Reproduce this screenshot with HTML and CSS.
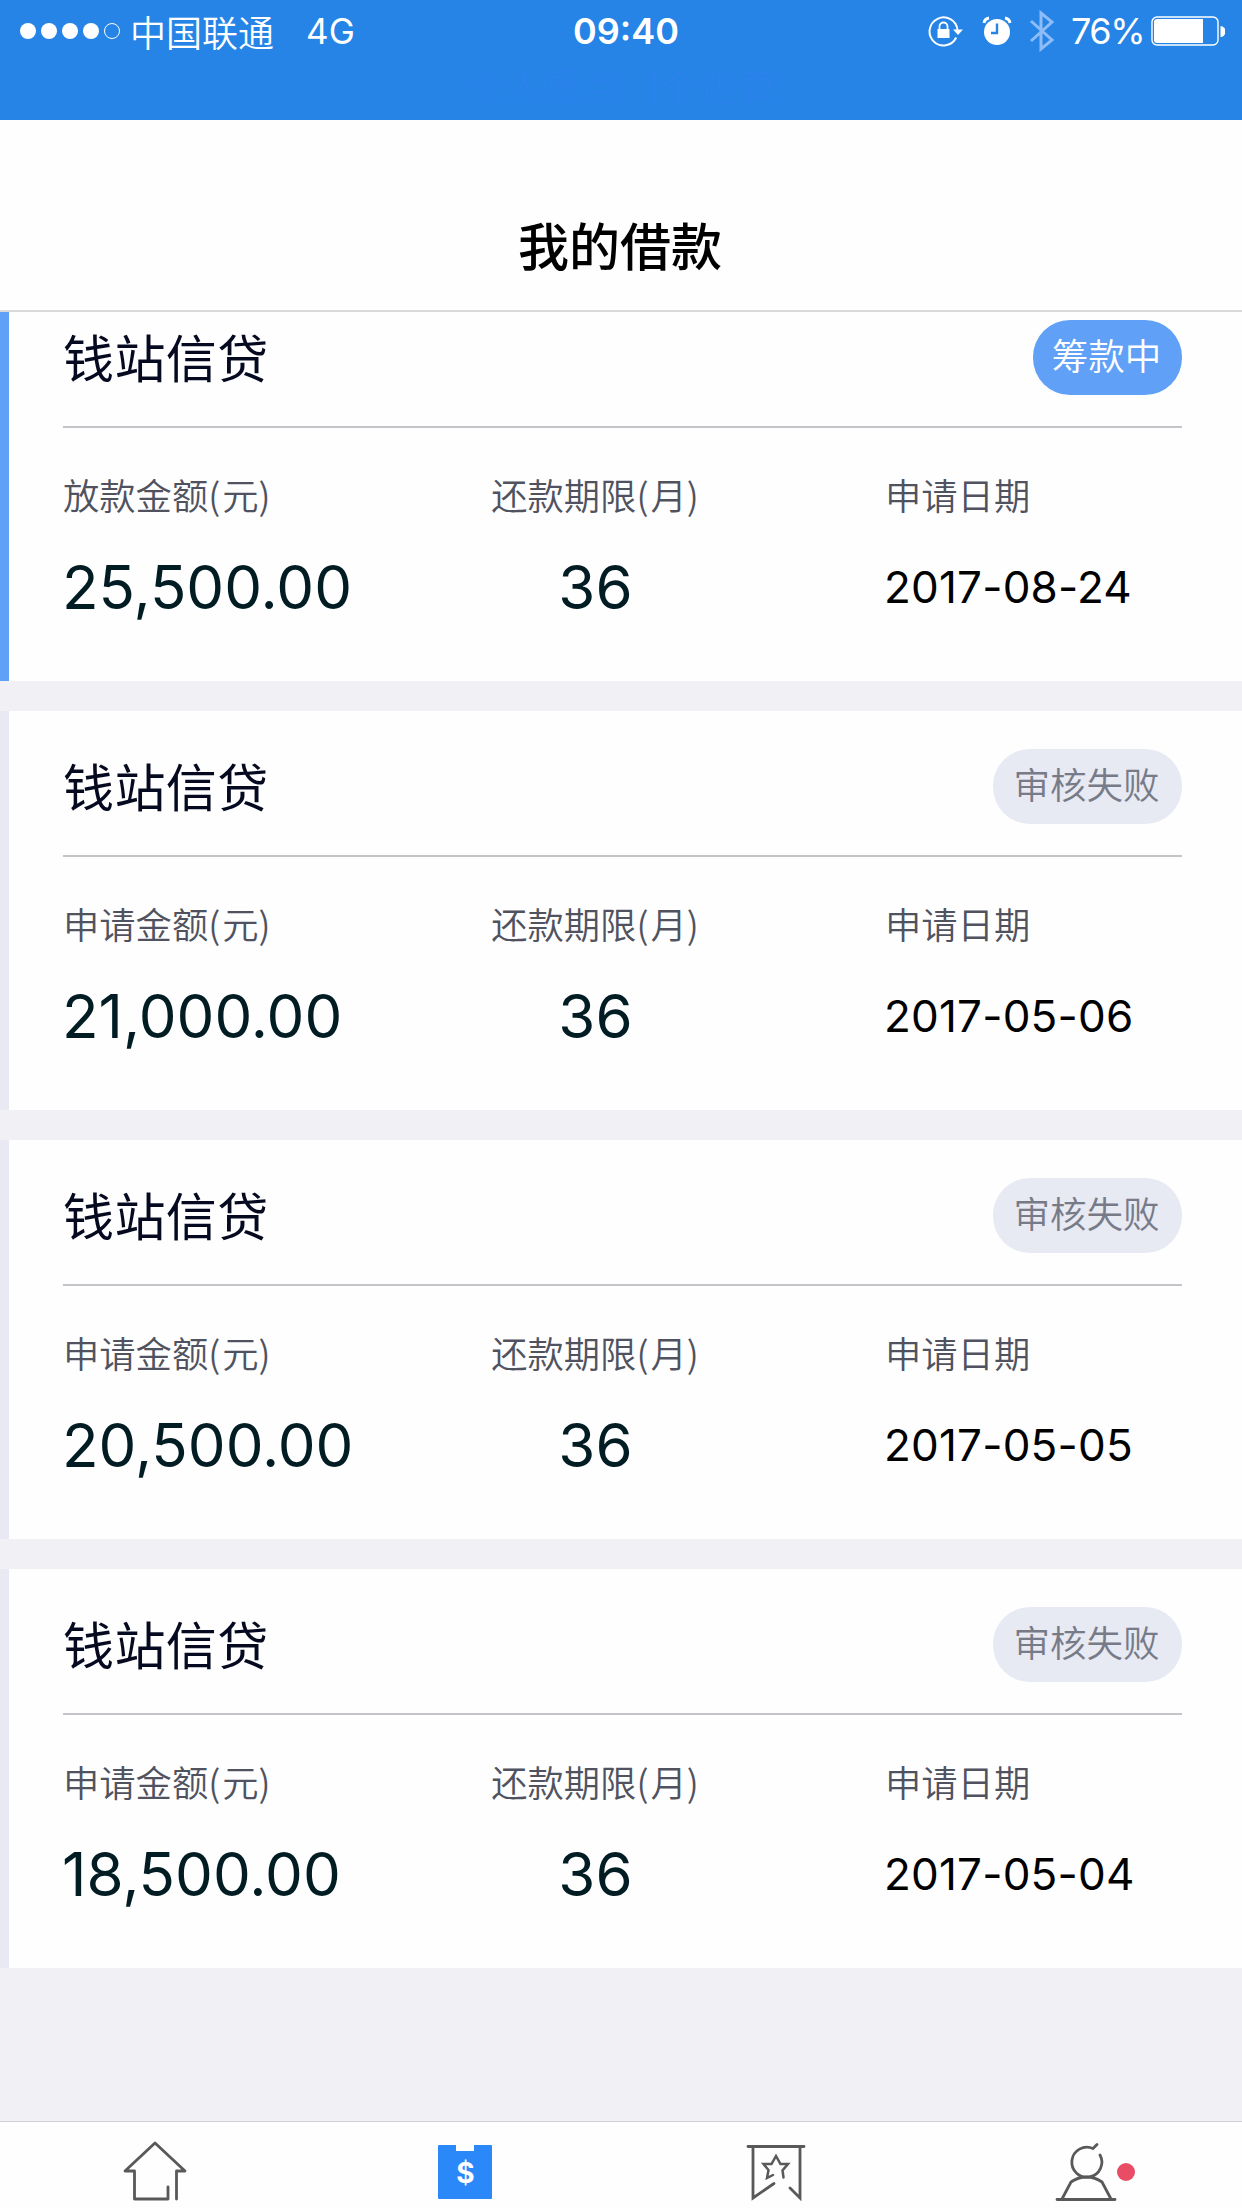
FILE: index.html
```html
<!DOCTYPE html>
<html lang="zh-CN">

<head>
    <meta charset="UTF-8">
    <meta name="viewport" content="width=device-width, initial-scale=1.0">
    <title>我的借款</title>
    <link rel="stylesheet" href="styles.css">
</head>

<body>
    <div class="status-bar">
        <div class="status-row">
            <div class="status-left">
                <div class="signal"><i></i><i></i><i></i><i></i><i class="empty"></i></div>
                <span class="carrier">中国联通</span>
                <span class="network">4G</span>
            </div>
            <span class="time">09:40</span>
            <div class="status-right">
                <svg class="icon-lock" width="36" height="32" viewBox="0 0 36 32" fill="none">
                    <path d="M28.2 22.5A14 14 0 1 1 29.5 15" stroke="#fff" stroke-width="2" />
                    <path d="M25 14.5h10l-5 5.500z" fill="#fff" />
                    <path d="M11.500 15v-3.500a4 4 0 0 1 8 0V15" stroke="#fff" stroke-width="1.800" />
                    <rect x="9.500" y="14" width="12" height="9" fill="#fff" />
                </svg>
                <svg class="icon-alarm" width="30" height="30" viewBox="0 0 30 30" fill="none">
                    <circle cx="15" cy="16" r="13" fill="#fff" />
                    <path d="M2 7a6 6 0 0 1 5-5M23 2a6 6 0 0 1 5 5" stroke="#fff" stroke-width="3" />
                    <path d="M15 7.500V17H9" stroke="#2584e6" stroke-width="2.400" />
                </svg>
                <svg class="icon-bluetooth" width="26" height="42" viewBox="0 0 26 42" fill="none">
                    <path d="M2 11l21 19-11 9V3l11 9L2 31" stroke="#8ebcf8" stroke-width="3" />
                </svg>
                <span class="battery-text">76%</span>
                <svg class="icon-battery" width="74" height="30" viewBox="0 0 74 30" fill="none">
                    <rect x="1" y="1" width="66" height="28" rx="5" stroke="#fff" stroke-width="1.400" />
                    <path d="M6 3h46v24H6a3 3 0 0 1-3-3V6a3 3 0 0 1 3-3z" fill="#fff" />
                    <path d="M69.500 10a5 5.500 0 0 1 0 11z" fill="#fff" />
                </svg>
            </div>
        </div>
        <p class="notice">个人重点&nbsp; 1个进算</p>
    </div>

    <header class="nav-bar">
        <h1>我的借款</h1>
    </header>

    <main class="list">
        <section class="card active">
            <div class="card-head">
                <h2>钱站信贷</h2>
                <span class="badge">筹款中</span>
            </div>
            <div class="card-body">
                <div class="col amount">
                    <p class="label">放款金额<span>(</span>元<span>)</span></p>
                    <p class="value">25,500.00</p>
                </div>
                <div class="col term">
                    <p class="label">还款期限<span>(</span>月<span>)</span></p>
                    <p class="value">36</p>
                </div>
                <div class="col date">
                    <p class="label">申请日期</p>
                    <p class="value">2017-08-24</p>
                </div>
            </div>
        </section>
        <section class="card">
            <div class="card-head">
                <h2>钱站信贷</h2>
                <span class="badge">审核失败</span>
            </div>
            <div class="card-body">
                <div class="col amount">
                    <p class="label">申请金额<span>(</span>元<span>)</span></p>
                    <p class="value">21,000.00</p>
                </div>
                <div class="col term">
                    <p class="label">还款期限<span>(</span>月<span>)</span></p>
                    <p class="value">36</p>
                </div>
                <div class="col date">
                    <p class="label">申请日期</p>
                    <p class="value">2017-05-06</p>
                </div>
            </div>
        </section>
        <section class="card">
            <div class="card-head">
                <h2>钱站信贷</h2>
                <span class="badge">审核失败</span>
            </div>
            <div class="card-body">
                <div class="col amount">
                    <p class="label">申请金额<span>(</span>元<span>)</span></p>
                    <p class="value">20,500.00</p>
                </div>
                <div class="col term">
                    <p class="label">还款期限<span>(</span>月<span>)</span></p>
                    <p class="value">36</p>
                </div>
                <div class="col date">
                    <p class="label">申请日期</p>
                    <p class="value">2017-05-05</p>
                </div>
            </div>
        </section>
        <section class="card">
            <div class="card-head">
                <h2>钱站信贷</h2>
                <span class="badge">审核失败</span>
            </div>
            <div class="card-body">
                <div class="col amount">
                    <p class="label">申请金额<span>(</span>元<span>)</span></p>
                    <p class="value">18,500.00</p>
                </div>
                <div class="col term">
                    <p class="label">还款期限<span>(</span>月<span>)</span></p>
                    <p class="value">36</p>
                </div>
                <div class="col date">
                    <p class="label">申请日期</p>
                    <p class="value">2017-05-04</p>
                </div>
            </div>
        </section>
    </main>

    <nav class="tab-bar">
        <a class="tab">
            <svg width="64" height="60" viewBox="0 0 64 60" fill="none" stroke="#595959" stroke-width="2.800" stroke-linecap="round" stroke-linejoin="round">
                <path d="M53.500 58V30H62L32 2 2 30h9.500v28H45V46" />
            </svg>
        </a>
        <a class="tab">
            <svg width="64" height="60" viewBox="0 0 64 60">
                <path d="M6 4h17v6h18V4h17a1 1 0 0 1 1 1v52a1 1 0 0 1-1 1H6a1 1 0 0 1-1-1V5a1 1 0 0 1 1-1z" fill="#2b88f8" />
                <text class="dollar" x="32.500" y="42" text-anchor="middle">$</text>
            </svg>
        </a>
        <a class="tab">
            <svg width="64" height="60" viewBox="0 0 64 60" fill="none" stroke="#595959" stroke-width="2.800" stroke-linecap="round">
                <path d="M4 5.500h56M9 6v51l21-14.500M56 6v51L46 47" />
                <path d="M29 34l-6 3 1.500-8-5-6h8l4.500-8 4.500 8h7.500l-5.500 6.500 1 7" stroke-width="2.500" />
            </svg>
        </a>
        <a class="tab">
            <svg width="64" height="60" viewBox="0 0 64 60" fill="none" stroke="#595959" stroke-width="2.800" stroke-linecap="round">
                <path d="M39 7.500A15 15 0 1 0 46 14M39 7.500l4-4" />
                <path d="M3 58.500h58M8 58l9-17q7-5 15.500-5T48 41l9 17" />
            </svg>
            <span class="dot"></span>
        </a>
    </nav>
</body>

</html>
```
FILE: styles.css
```css
* {
    margin: 0;
    padding: 0;
    box-sizing: border-box;
}

body {
    display: flex;
    flex-direction: column;
    width: 100%;
    height: 2208px;
    background-color: #f0f0f5;
    font-family: Inter, "Noto Sans CJK SC", sans-serif;
    overflow: hidden;
}

h1,
h2 {
    font-weight: 400;
}

/* status bar */
.status-bar {
    flex: none;
    height: 120px;
    background-color: #2584e6;
    color: #fff;
}

.status-row {
    position: relative;
    display: flex;
    justify-content: space-between;
    align-items: center;
    height: 62px;
    padding: 0 17px 0 20px;
}

.status-left,
.status-right {
    display: flex;
    align-items: center;
}

.signal {
    display: flex;
    gap: 5px;
}

.signal i {
    width: 16px;
    height: 16px;
    border-radius: 50%;
    background-color: #fff;
}

.signal i.empty {
    background: none;
    border: 1px solid #fff;
}

.carrier {
    margin-left: 10px;
    font-family: "Noto Sans CJK SC", sans-serif;
    font-size: 36px;
    font-weight: 350;
    line-height: 60px;
}

.network {
    margin-left: 32px;
    font-size: 35px;
}

.time {
    position: absolute;
    left: 573px;
    font-size: 36px;
    font-weight: 600;
}

.icon-alarm {
    margin-left: 18px;
}

.icon-bluetooth {
    margin-left: 17px;
}

.battery-text {
    width: 71px;
    margin: 0 9px 0 16px;
    font-size: 36px;
    letter-spacing: -1.5px;
    white-space: nowrap;
}

.notice {
    height: 52px;
    color: #2983ea;
    font-size: 39px;
    line-height: 52px;
    text-align: center;
}

/* title */
.nav-bar {
    flex: none;
    position: relative;
    z-index: 1;
    height: 192px;
    padding-top: 86px;
    background-color: #fefefe;
    border-bottom: 2px solid #d9d9db;
}

.nav-bar h1 {
    color: #000;
    font-size: 51px;
    font-weight: 500;
    line-height: 84px;
    text-align: center;
    text-indent: -2px;
}

/* loan list, scrolled 30px under the title */
.list {
    flex: 1;
    display: flex;
    flex-direction: column;
    gap: 30px;
    margin-top: -30px;
}

.card {
    height: 399px;
    padding: 0 60px 0 54px;
    background-color: #fefefe;
    border-left: 9px solid #e8e9f2;
}

.card.active {
    border-left-color: #60a1f7;
}

.card-head {
    display: flex;
    justify-content: space-between;
    align-items: flex-start;
    height: 146px;
    padding-top: 38px;
    border-bottom: 2px solid #c4c4c8;
}

.card-head h2 {
    color: #060a20;
    font-size: 51px;
    letter-spacing: 0.4px;
    line-height: 80px;
}

.badge {
    width: 189px;
    height: 75px;
    padding-right: 2px;
    border-radius: 37px;
    background-color: #e7e9f3;
    color: #777b88;
    font-size: 36.5px;
    font-weight: 350;
    line-height: 75px;
    text-align: center;
}

.active .badge {
    width: 149px;
    background-color: #60a1f7;
    color: #fff;
}

.card-body {
    display: flex;
    padding-top: 38px;
}

.amount {
    width: 427px;
}

.term {
    width: 212px;
    margin-right: 183px;
    text-align: center;
}

.label {
    color: #50535f;
    font-family: "Noto Sans CJK SC", sans-serif;
    font-size: 36.3px;
    font-weight: 350;
    line-height: 56px;
    white-space: nowrap;
}

.label span {
    letter-spacing: 2px;
}

.value {
    margin: 23px 0 0 -1px;
    color: #021c24;
    font-size: 60px;
    line-height: 84px;
    white-space: nowrap;
}

.date .value {
    color: #000;
    font-size: 44px;
    letter-spacing: 0.2px;
}

/* tab bar */
.tab-bar {
    flex: none;
    display: flex;
    height: 87px;
    background-color: #fefefe;
    border-top: 1px solid #cfcfd6;
}

.tab {
    position: relative;
    flex: 1;
    display: flex;
    justify-content: center;
    padding: 19px 1px 0 0;
}

.dollar {
    fill: #fff;
    font-size: 28px;
    font-weight: 700;
}

.dot {
    position: absolute;
    top: 41px;
    right: 107px;
    width: 18px;
    height: 18px;
    border-radius: 50%;
    background-color: #e84d65;
}
```
